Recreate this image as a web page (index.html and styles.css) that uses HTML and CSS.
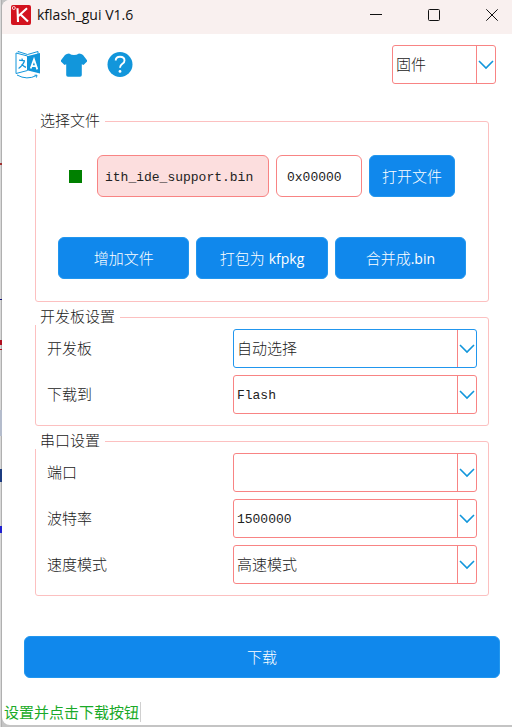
FILE: index.html
```html
<!DOCTYPE html>
<html lang="zh-CN">
<head>
  <meta charset="UTF-8">
  <title>kflash_gui V1.6</title>
  <meta name="viewport" content="width=device-width, initial-scale=1.0">
  <link rel="stylesheet" href="styles.css">
</head>
<body>
  <div class="window">
    <header class="titlebar">
      <svg class="app-icon" viewBox="0 0 20 20" aria-hidden="true">
        <rect width="20" height="20" rx="2" fill="#d3131f"/>
        <circle cx="2.8" cy="3" r="1.5" fill="none" stroke="#fff" stroke-width="0.8"/>
        <path d="M6.5 3.2L7 17M16 3.2L7.2 11.2M9.6 9.4L17 16.6" fill="none" stroke="#fff" stroke-width="2.1"/>
      </svg>
      <h1 class="title">kflash_gui V1.6</h1>
      <div class="window-controls">
        <button type="button" aria-label="最小化">
          <svg viewBox="0 0 12 12"><path d="M0 5.5H12"/></svg>
        </button>
        <button type="button" aria-label="最大化">
          <svg viewBox="0 0 12 12"><rect x="0.5" y="0.5" width="11" height="11" rx="1"/></svg>
        </button>
        <button type="button" aria-label="关闭">
          <svg viewBox="0 0 12 12"><path d="M0.3 0.3L11.7 11.7M11.7 0.3L0.3 11.7"/></svg>
        </button>
      </div>
    </header>

    <div class="toolbar">
      <button type="button" class="tool" aria-label="语言">
        <svg viewBox="0 0 26 28">
          <path d="M3 1.5V0.5L12.5 3.5L23 0.5V3" fill="none" stroke="#1296db" stroke-width="1"/>
          <path d="M13 5L25 2V22.5L13 19.5Z" fill="#1296db"/>
          <path d="M12.5 5L1 2V22.5L12.5 19.5Z" fill="#fff" stroke="#1296db" stroke-width="1"/>
          <path d="M4 9.2L10 9.8M7 7.5L7.4 9.5M9.6 9.8Q8 14.5 3.6 17.5M6.6 13.2Q8.5 15.5 11 16.4" fill="none" stroke="#1296db" stroke-width="1.2"/>
          <path d="M15.7 17.5L19 8.5L22.3 18.4M16.8 14.8L21.2 15.2" fill="none" stroke="#fff" stroke-width="1.8"/>
          <path d="M2 24Q12 29.5 21.5 24.5M19.5 24.2L22 24.2L21.4 26.6" fill="none" stroke="#1296db" stroke-width="1"/>
        </svg>
      </button>
      <button type="button" class="tool" aria-label="皮肤">
        <svg viewBox="0 0 26 28">
          <path d="M8 2.5Q13 5.5 18 2.5Q20.5 2.5 22 4L26 9.2Q26.5 10 25.8 10.8L23 13.6Q22.3 14.2 21.5 13.6L20.8 13.2V24Q20.8 25.8 19 25.8H7Q5.2 25.8 5.2 24V13.2L4.5 13.6Q3.7 14.2 3 13.6L0.2 10.8Q-0.5 10 0 9.2L4 4Q5.5 2.5 8 2.5Z" fill="#1296db"/>
        </svg>
      </button>
      <button type="button" class="tool" aria-label="帮助">
        <svg viewBox="0 0 26 28">
          <circle cx="13" cy="13.5" r="12.5" fill="#1296db"/>
          <path d="M8.7 9.6Q8.7 5.8 13 5.8Q17.5 5.8 17.5 9.4Q17.5 11.4 15.4 12.8Q13 14.4 13 16.8" fill="none" stroke="#fff" stroke-width="1.9"/>
          <circle cx="13" cy="20.4" r="1.4" fill="#fff"/>
        </svg>
      </button>
      <select class="combo mode" aria-label="类型">
        <option>固件</option>
      </select>
    </div>

    <form class="content">
      <fieldset class="group files">
        <legend>选择文件</legend>
        <div class="file-row">
          <span class="status-dot"></span>
          <input type="text" class="field path" value="ith_ide_support.bin" aria-label="文件">
          <input type="text" class="field" value="0x00000" aria-label="地址">
          <button type="button" class="btn">打开文件</button>
        </div>
        <div class="file-actions">
          <button type="button" class="btn">增加文件</button>
          <button type="button" class="btn">打包为 <span class="latin">kfpkg</span></button>
          <button type="button" class="btn">合并成<span class="latin">.bin</span></button>
        </div>
      </fieldset>

      <fieldset class="group settings">
        <legend>开发板设置</legend>
        <label for="board">开发板</label>
        <select class="combo active" id="board">
          <option>自动选择</option>
        </select>
        <label for="target">下载到</label>
        <select class="combo mono" id="target">
          <option>Flash</option>
        </select>
      </fieldset>

      <fieldset class="group settings">
        <legend>串口设置</legend>
        <label for="port">端口</label>
        <select class="combo" id="port">
          <option></option>
        </select>
        <label for="baud">波特率</label>
        <select class="combo mono" id="baud">
          <option>1500000</option>
        </select>
        <label for="speed">速度模式</label>
        <select class="combo" id="speed">
          <option>高速模式</option>
        </select>
      </fieldset>

      <button type="button" class="btn download">下载</button>
    </form>

    <footer class="statusbar">
      <span class="status">设置并点击下载按钮</span>
    </footer>
  </div>
</body>
</html>
```
FILE: styles.css
```css
* {
  box-sizing: border-box;
}
body {
  margin: 0;
  min-height: 100vh;
  padding: 0 0 2px 2px;
  /* slivers of the desktop left of the window */
  background:
    linear-gradient(#a03030, #a03030) 0 163px / 2px 2px no-repeat,
    linear-gradient(#10107a, #10107a) 0 299px / 2px 1px no-repeat,
    linear-gradient(#b01020, #b01020) 0 340px / 2px 5px no-repeat,
    linear-gradient(#b01020, #b01020) 0 349px / 2px 1px no-repeat,
    linear-gradient(#b4bccc, #b4bccc) 0 410px / 2px 26px no-repeat,
    linear-gradient(#1c3c80, #1c3c80) 0 469px / 2px 13px no-repeat,
    linear-gradient(#2020d0, #2020d0) 0 526px / 2px 7px no-repeat,
    linear-gradient(90deg, #d8d8d8 1px, #b0b0b0 1px) 0 0 / 2px 100% no-repeat,
    #c4c4c4;
  font-family: "Open Sans", "Noto Sans CJK SC", sans-serif;
  font-size: 15px;
  font-weight: 300;
  color: #222;
  display: flex;
}
button, input, select {
  font: inherit;
  color: inherit;
  margin: 0;
  min-width: 0;
}
.window {
  flex: 1;
  min-width: 0;
  display: flex;
  flex-direction: column;
  background: #fff;
  border-radius: 8px 0 0 8px;
  overflow: hidden;
}

/* Title bar */
.titlebar {
  display: flex;
  align-items: center;
  height: 34px;
  padding: 0 14px 4px 9px;
  background: #f9f0ef;
  color: #111;
}
.app-icon {
  width: 20px;
  height: 20px;
}
.title {
  margin: 0 auto 0 6px;
  font-family: "Open Sans", sans-serif;
  font-size: 14px;
  font-weight: 400;
  line-height: 18px;
  padding-bottom: 0;
}
.window-controls {
  display: flex;
  gap: 46px;
}
.window-controls button {
  padding: 0;
  border: none;
  background: none;
}
.window-controls svg {
  display: block;
  width: 12px;
  height: 12px;
  fill: none;
  stroke: #111;
  overflow: visible;
}

/* Toolbar */
.toolbar {
  display: flex;
  align-items: center;
  gap: 20px;
  padding: 11px 16px 0 13px;
}
.tool {
  padding: 0;
  border: none;
  background: none;
}
.tool svg {
  display: block;
  width: 26px;
  height: 28px;
}
.mode {
  width: 104px;
  margin-left: auto;
}

/* Controls */
.combo {
  appearance: none;
  height: 39px;
  padding: 0 20px 2px 3px;
  border: 1px solid #f88484;
  border-radius: 3px;
  outline: none;
  background:
    url("data:image/svg+xml,%3Csvg xmlns='http://www.w3.org/2000/svg' width='16' height='10'%3E%3Cpath d='M1 1L8 8L15 1' fill='none' stroke='%231296db' stroke-width='1.6'/%3E%3C/svg%3E") right 1px center no-repeat,
    linear-gradient(#f88484, #f88484) right 18px top / 1px 100% no-repeat,
    #fff;
}
.combo.active {
  border-color: #2196ee;
}
.mono {
  padding: 2px 20px 0 3px;
  font-family: "Liberation Mono", monospace;
  font-size: 13px;
}
.field {
  width: 100%;
  height: 42px;
  padding: 2px 10px 0;
  border: 1px solid #f88484;
  border-radius: 6px;
  background: #fff;
  font-family: "Liberation Mono", monospace;
  font-size: 13px;
}
.path {
  padding: 2px 7px 0;
  background: #fcdede;
}
.btn {
  height: 42px;
  padding: 0 0 2px;
  border: 1px solid #2196ee;
  border-radius: 6px;
  background: #1088ec;
  color: #fff;
}
.latin {
  font-size: 14px;
  font-weight: 400;
}

/* Groups */
.content {
  display: flex;
  flex-direction: column;
  gap: 8px;
  padding: 30px 12px 0 22px;
}
.group {
  margin: 0 11px;
  min-width: 0;
  border: 1px solid #fcc0c0;
  border-radius: 3px;
}
.group legend {
  margin-left: -1px;
  padding: 0 5px 2px;
  background: #fff;
  line-height: 13px;
}
.files {
  padding: 26px 0 22px;
}
.file-row {
  display: grid;
  grid-template-columns: 21px 2fr 1fr 1fr;
  align-items: center;
  gap: 7px;
  margin: 0 33px 40px;
}
.status-dot {
  width: 13px;
  height: 13px;
  background: #008000;
}
.file-actions {
  display: grid;
  grid-template-columns: repeat(3, 1fr);
  gap: 7px;
  margin: 0 22px;
}
.settings {
  display: grid;
  grid-template-columns: 11fr 15fr;
  gap: 7px;
  align-items: center;
  padding: 4px 11px 11px;
}
.settings legend {
  margin-left: -12px;
}
.settings label {
  padding-bottom: 2px;
}
.download {
  margin-top: 32px;
}

/* Status bar */
.statusbar {
  display: flex;
  margin-top: auto;
  padding: 0 2px 3px;
}
.status {
  padding-right: 1px;
  border-right: 1px solid #d0d0d0;
  color: #1aaa28;
  font-weight: 400;
  line-height: 20px;
}
```
